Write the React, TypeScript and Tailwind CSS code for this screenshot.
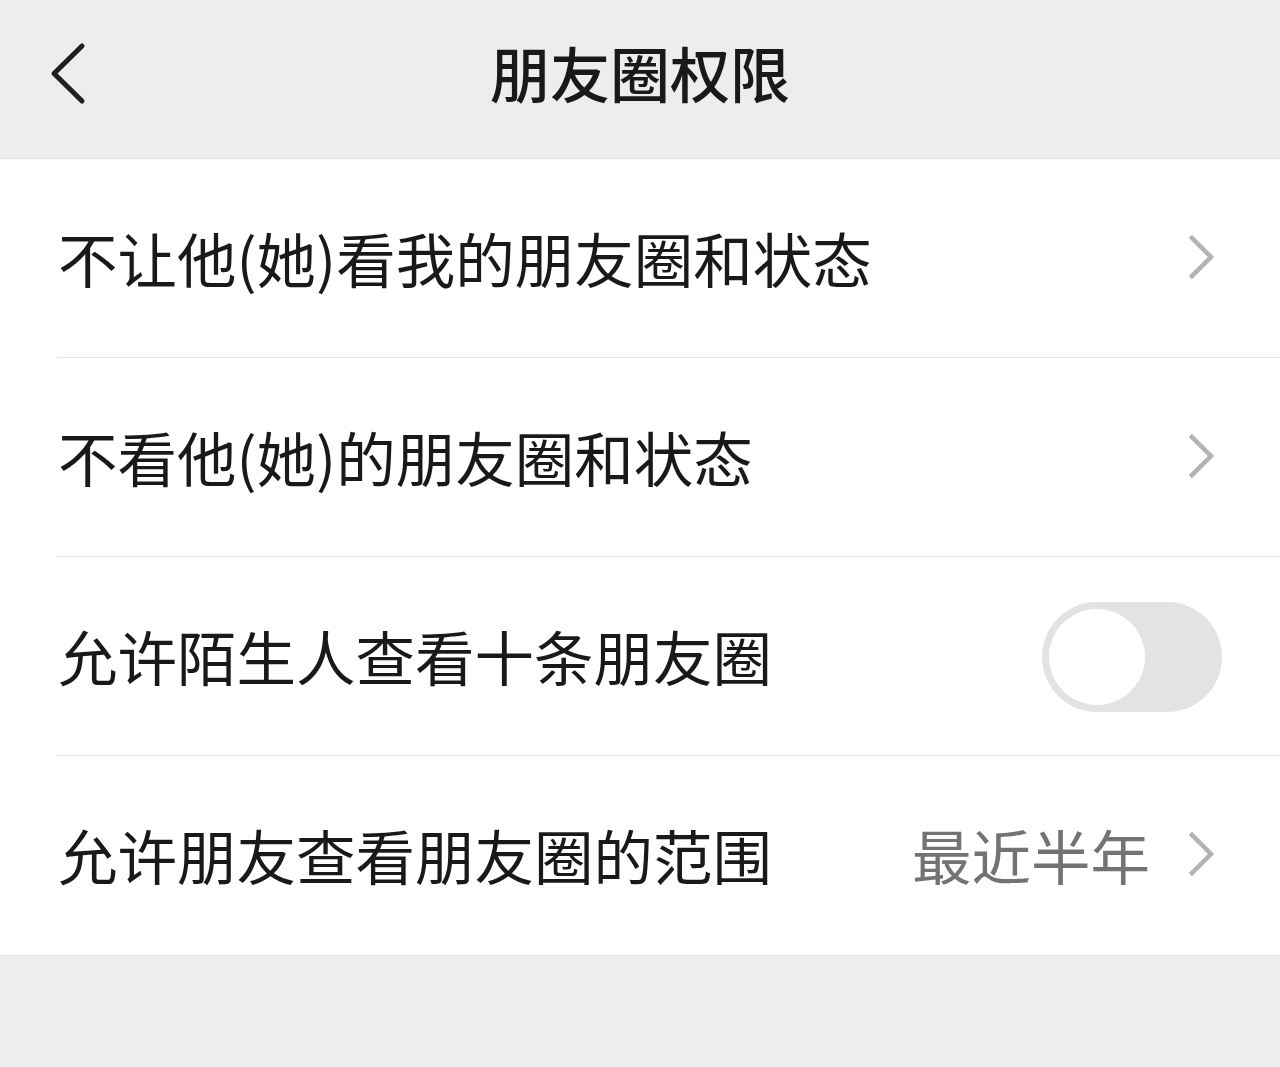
import React from "react";

const font = { fontFamily: '"Noto Sans CJK SC", "Noto Sans", sans-serif' };

function Chevron() {
  return (
    <svg width="30" height="48" viewBox="0 0 30 48" className="shrink-0">
      <polyline points="4,3 23,22 4,41" fill="none" stroke="#b3b3b3" strokeWidth="4.5" strokeLinecap="square" />
    </svg>
  );
}

function Row({ label, right, last }: { label: string; right?: React.ReactNode; last?: boolean }) {
  return (
    <div className="relative flex h-[199px] items-center pl-[58px] pr-[62px]">
      <div className="flex-1 pb-[2px] text-[59.5px] leading-none text-[#191919]">{label}</div>
      {right}
      {!last && <div className="absolute bottom-0 left-[57px] right-0 h-px bg-[#e5e5e5]" />}
    </div>
  );
}

export default function App() {
  return (
    <div className="flex min-h-[1067px] w-[1280px] flex-col bg-[#ededed]" style={font}>
      <div className="relative flex h-[159px] items-center justify-center border-b border-[#dedede] bg-[#ededed] pb-[14px]">
        <svg width="40" height="64" viewBox="0 0 40 64" className="absolute left-[48px] top-[42px]">
          <polyline points="34,4 6,31.5 34,59" fill="none" stroke="#1f1f1f" strokeWidth="5" strokeLinecap="round" strokeLinejoin="round" />
        </svg>
        <div className="text-[60px] font-medium leading-none text-[#191919]">朋友圈权限</div>
      </div>
      <div className="border-b border-[#dedede] bg-white">
        <Row label="不让他(她)看我的朋友圈和状态" right={<Chevron />} />
        <Row label="不看他(她)的朋友圈和状态" right={<Chevron />} />
        <Row
          label="允许陌生人查看十条朋友圈"
          right={
            <div className="mr-[-4px] flex h-[110px] w-[180px] items-center rounded-full bg-[#e3e3e3] pl-[7px]">
              <div className="h-[96px] w-[96px] rounded-full bg-white" />
            </div>
          }
        />
        <Row
          label="允许朋友查看朋友圈的范围"
          last
          right={
            <div className="flex items-center">
              <span className="mr-[38px] pb-[2px] text-[59.5px] leading-none text-[#737373]">最近半年</span>
              <Chevron />
            </div>
          }
        />
      </div>
      <div className="flex-1 bg-[#ededed]" />
    </div>
  );
}
